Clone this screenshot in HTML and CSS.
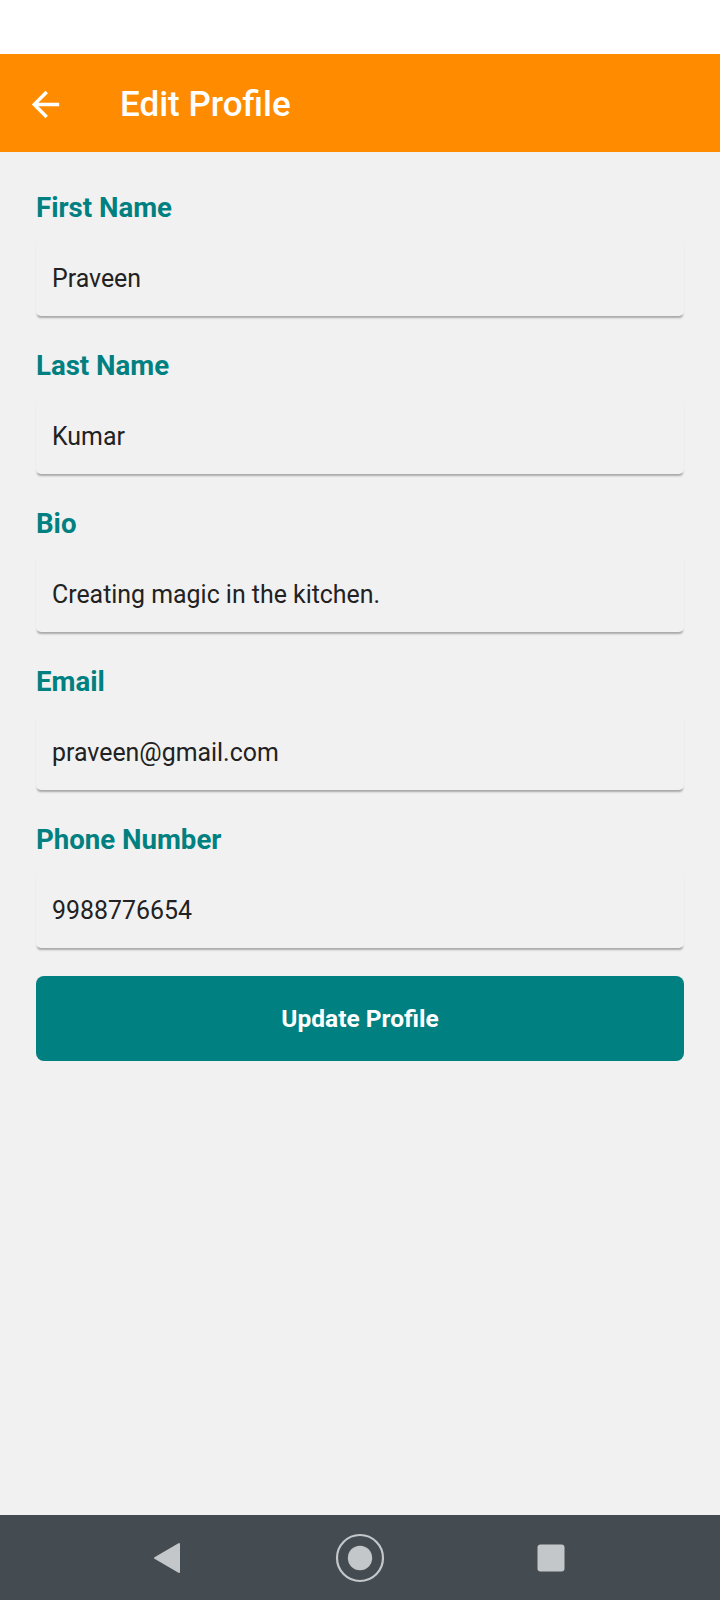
FILE: index.html
```html
<!DOCTYPE html>
<html lang="en">
<head>
<meta charset="utf-8">
<title>Edit Profile</title>
<link rel="stylesheet" href="styles.css">
</head>
<body>
<div class="screen">
  <div class="status-bar"></div>
  <header class="app-bar">
    <button class="back-btn" aria-label="Back">
      <svg viewBox="0 0 24 24" width="41" height="41"><path fill="#ffffff" d="M20 11H7.83l5.59-5.59L12 4l-8 8 8 8 1.41-1.41L7.83 13H20v-2z"/></svg>
    </button>
    <h1 class="title">Edit Profile</h1>
  </header>
  <main class="form">
    <div class="section">
      <label class="label">First Name</label>
      <div class="field">Praveen</div>
    </div>
    <div class="section">
      <label class="label">Last Name</label>
      <div class="field">Kumar</div>
    </div>
    <div class="section">
      <label class="label">Bio</label>
      <div class="field">Creating magic in the kitchen.</div>
    </div>
    <div class="section">
      <label class="label">Email</label>
      <div class="field">praveen@gmail.com</div>
    </div>
    <div class="section">
      <label class="label">Phone Number</label>
      <div class="field">9988776654</div>
    </div>
    <button class="submit">Update Profile</button>
  </main>
  <nav class="nav-bar">
    <svg class="nav-back" viewBox="0 0 28 32" width="28" height="32"><path fill="#c3c7ca" stroke="#c3c7ca" stroke-width="2" stroke-linejoin="round" d="M26 2 L26 30 L2 16 Z"/></svg>
    <svg class="nav-home" viewBox="0 0 50 50" width="50" height="50"><circle cx="25" cy="25" r="23" fill="none" stroke="#c3c7ca" stroke-width="2.2"/><circle cx="25" cy="25" r="12.2" fill="#c3c7ca"/></svg>
    <svg class="nav-recent" viewBox="0 0 28 28" width="28" height="28"><rect x="0.5" y="0.5" width="27" height="27" rx="3" fill="#c3c7ca"/></svg>
  </nav>
</div>
</body>
</html>
```
FILE: styles.css
```css
* { box-sizing: border-box; }
html, body { margin: 0; padding: 0; }
body {
  font-family: Roboto, "Noto Sans", "Liberation Sans", sans-serif;
  background: #f1f1f1;
}
.screen {
  width: 720px;
  height: 1600px;
  display: flex;
  flex-direction: column;
  background: #f1f1f1;
}
.status-bar {
  height: 54px;
  background: #ffffff;
  flex: none;
}
.app-bar {
  height: 98px;
  flex: none;
  background: #ff8c00;
  display: flex;
  align-items: center;
  padding-left: 25px;
}
.back-btn {
  width: 41px;
  height: 41px;
  padding: 0;
  border: 0;
  background: none;
  display: flex;
  margin-top: 2px;
}
.title {
  margin: 2px 0 0 54px;
  font-size: 35px;
  font-weight: 500;
  color: #ffffff;
  line-height: 41px;
}
.form {
  flex: 1;
  padding: 40px 36px 0;
  display: flex;
  flex-direction: column;
  gap: 34px;
}
.section {
  display: flex;
  flex-direction: column;
  gap: 17px;
}
.label {
  font-size: 27.6px;
  line-height: 31px;
  font-weight: 700;
  color: #008080;
}
.field {
  height: 76px;
  display: flex;
  align-items: center;
  padding-left: 16px;
  font-size: 24.9px;
  color: #222222;
  background: #f1f1f1;
  border-radius: 5px;
  box-shadow: 0 2.5px 2px -1px rgba(0, 0, 0, 0.3);
}
.submit {
  margin-top: -6px;
  height: 85px;
  border: 0;
  border-radius: 8px;
  background: #008080;
  color: #ffffff;
  font-family: Roboto, "Noto Sans", "Liberation Sans", sans-serif;
  font-size: 24.5px;
  font-weight: 700;
}
.nav-bar {
  height: 85px;
  flex: none;
  background: #444c52;
  display: flex;
  align-items: center;
  padding-left: 153px;
}
.nav-home {
  margin-left: 154px;
}
.nav-recent {
  margin-left: 152px;
}
```
